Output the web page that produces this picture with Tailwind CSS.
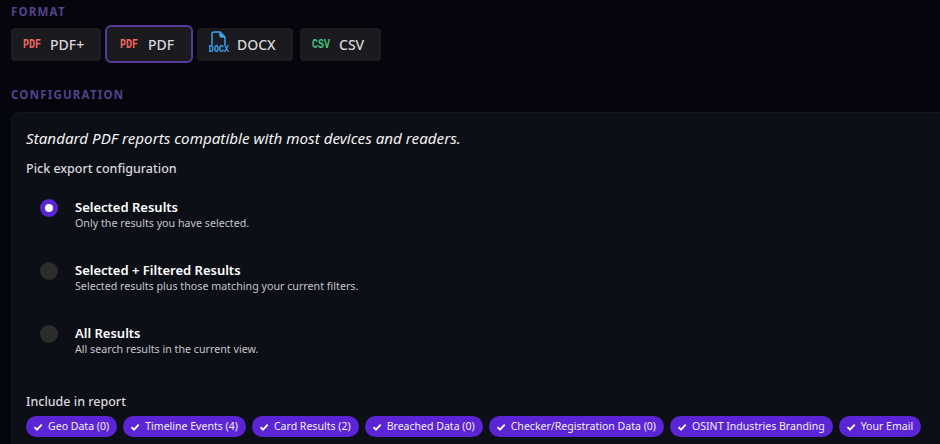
<!DOCTYPE html>
<html lang="en">
<head>
  <meta charset="UTF-8" />
  <title>Export report</title>
  <script src="https://cdn.jsdelivr.net/npm/@tailwindcss/browser@4"></script>
</head>
<body class="w-[940px] h-[444px] overflow-hidden bg-[#04050d] font-['Noto_Sans',sans-serif] text-white">
  <div class="pl-[11px] pt-[4px]">
    <div class="h-[15px] leading-[15px] text-[11.5px] font-bold tracking-[1.2px] text-[#54428a]">FORMAT</div>

    <!-- format buttons -->
    <div class="mt-[6px] flex items-center h-[38px]">
      <div class="h-[33px] w-[90px] rounded-[4px] bg-[#1a1a1f] flex items-center pl-[12px]">
        <span class="w-[19px] scale-y-125 font-['Liberation_Mono',monospace] font-bold text-[10px] text-[#f0685c]">PDF</span>
        <span class="ml-[8px] text-[14px] font-medium text-[#d6d6da]">PDF+</span>
      </div>
      <div class="ml-[4px] h-[38px] w-[88px] rounded-[6px] border-2 border-[#54399a] bg-[#1a1a1f] flex items-center pl-[13px]">
        <span class="w-[19px] scale-y-125 font-['Liberation_Mono',monospace] font-bold text-[10px] text-[#f0685c]">PDF</span>
        <span class="ml-[9px] text-[14px] font-medium text-[#d6d6da]">PDF</span>
      </div>
      <div class="ml-[4px] h-[33px] w-[96px] rounded-[4px] bg-[#1a1a1f] flex items-center pl-[12px]">
        <span class="w-[20px] h-[26px] flex flex-col items-center">
          <svg width="16" height="15" viewBox="0 0 16 15" fill="none" stroke="#3ba4ee" stroke-width="1.5"><path d="M1 14V3a2 2 0 0 1 2-2h6l5 5v8"/><path d="M9 1v3a2 2 0 0 0 2 2h3" fill="#3ba4ee"/></svg>
          <span class="scale-y-125 font-['Liberation_Mono',monospace] font-bold text-[8.5px] leading-[9px] text-[#3ba4ee]">DOCX</span>
        </span>
        <span class="ml-[8px] text-[14px] font-medium text-[#d6d6da]">DOCX</span>
      </div>
      <div class="ml-[7px] h-[33px] w-[81px] rounded-[4px] bg-[#1a1a1f] flex items-center pl-[12px]">
        <span class="w-[19px] scale-y-125 font-['Liberation_Mono',monospace] font-bold text-[10px] text-[#3fc47c]">CSV</span>
        <span class="ml-[8px] text-[14px] font-medium text-[#d6d6da]">CSV</span>
      </div>
    </div>

    <div class="mt-[24px] h-[15px] leading-[15px] text-[11.5px] font-bold tracking-[1.2px] text-[#54428a]">CONFIGURATION</div>

    <!-- configuration card -->
    <div class="mt-[10px] w-[960px] h-[340px] rounded-tl-[8px] border border-[#14161d] bg-[#0d0f17] pl-[14px] pt-[14px]">
      <p class="h-[22px] leading-[22px] text-[15.2px] italic text-[#f2f2f4]">Standard PDF reports compatible with most devices and readers.</p>
      <p class="mt-[11px] h-[18px] leading-[18px] text-[12.5px] font-medium text-[#d8d8dc]">Pick export configuration</p>

      <div class="mt-[18px] flex flex-col gap-[27px] pl-[14px]">
        <div class="flex items-start h-[36px] pt-[2px]">
          <span class="mt-[1px] w-[18px] h-[18px] rounded-full bg-[#5b25d6] flex items-center justify-center"><span class="w-[8px] h-[8px] rounded-full bg-white"></span></span>
          <div class="ml-[17px]">
            <div class="text-[13px] leading-[18px] font-semibold text-white">Selected Results</div>
            <div class="text-[10.7px] leading-[14px] text-[#c4c4c9]">Only the results you have selected.</div>
          </div>
        </div>
        <div class="flex items-start h-[36px] pt-[2px]">
          <span class="mt-[1px] w-[18px] h-[18px] rounded-full bg-[#2c2c2a]"></span>
          <div class="ml-[17px]">
            <div class="text-[13px] leading-[18px] font-semibold text-white">Selected + Filtered Results</div>
            <div class="text-[10.7px] leading-[14px] text-[#c4c4c9]">Selected results plus those matching your current filters.</div>
          </div>
        </div>
        <div class="flex items-start h-[36px] pt-[2px]">
          <span class="mt-[1px] w-[18px] h-[18px] rounded-full bg-[#2c2c2a]"></span>
          <div class="ml-[17px]">
            <div class="text-[13px] leading-[18px] font-semibold text-white">All Results</div>
            <div class="text-[10.7px] leading-[14px] text-[#c4c4c9]">All search results in the current view.</div>
          </div>
        </div>
      </div>

      <p class="mt-[35px] h-[18px] leading-[18px] text-[12.5px] font-medium text-[#d8d8dc]">Include in report</p>

      <!-- chips -->
      <div class="mt-[5px] flex gap-[6px] whitespace-nowrap text-[10.56px] leading-[21px] text-[#f2eefb]">
        <span class="h-[21px] rounded-full bg-[#5b25d6] flex items-center pl-[7px] pr-[8px]"><svg class="mr-[5px] shrink-0" width="10" height="10" viewBox="0 0 10 10" fill="none" stroke="white" stroke-width="1.8"><path d="M1.5 5.2 4 7.6 8.7 2.6"/></svg>Geo Data (0)</span>
        <span class="h-[21px] rounded-full bg-[#5b25d6] flex items-center pl-[7px] pr-[8px]"><svg class="mr-[5px] shrink-0" width="10" height="10" viewBox="0 0 10 10" fill="none" stroke="white" stroke-width="1.8"><path d="M1.5 5.2 4 7.6 8.7 2.6"/></svg>Timeline Events (4)</span>
        <span class="h-[21px] rounded-full bg-[#5b25d6] flex items-center pl-[7px] pr-[8px]"><svg class="mr-[5px] shrink-0" width="10" height="10" viewBox="0 0 10 10" fill="none" stroke="white" stroke-width="1.8"><path d="M1.5 5.2 4 7.6 8.7 2.6"/></svg>Card Results (2)</span>
        <span class="h-[21px] rounded-full bg-[#5b25d6] flex items-center pl-[7px] pr-[8px]"><svg class="mr-[5px] shrink-0" width="10" height="10" viewBox="0 0 10 10" fill="none" stroke="white" stroke-width="1.8"><path d="M1.5 5.2 4 7.6 8.7 2.6"/></svg>Breached Data (0)</span>
        <span class="h-[21px] rounded-full bg-[#5b25d6] flex items-center pl-[7px] pr-[8px]"><svg class="mr-[5px] shrink-0" width="10" height="10" viewBox="0 0 10 10" fill="none" stroke="white" stroke-width="1.8"><path d="M1.5 5.2 4 7.6 8.7 2.6"/></svg>Checker/Registration Data (0)</span>
        <span class="h-[21px] rounded-full bg-[#5b25d6] flex items-center pl-[7px] pr-[8px]"><svg class="mr-[5px] shrink-0" width="10" height="10" viewBox="0 0 10 10" fill="none" stroke="white" stroke-width="1.8"><path d="M1.5 5.2 4 7.6 8.7 2.6"/></svg>OSINT Industries Branding</span>
        <span class="h-[21px] rounded-full bg-[#5b25d6] flex items-center pl-[7px] pr-[8px]"><svg class="mr-[5px] shrink-0" width="10" height="10" viewBox="0 0 10 10" fill="none" stroke="white" stroke-width="1.8"><path d="M1.5 5.2 4 7.6 8.7 2.6"/></svg>Your Email</span>
      </div>
    </div>
  </div>
</body>
</html>
